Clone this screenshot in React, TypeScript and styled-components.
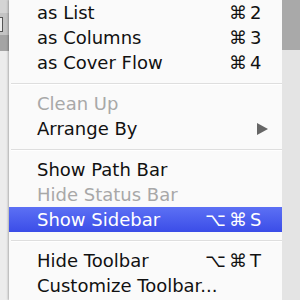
import React from "react";
import styled, { createGlobalStyle } from "styled-components";

const Global = createGlobalStyle`
  html, body { margin: 0; padding: 0; width: 300px; height: 300px; overflow: hidden; background: #e6e6e6; }
  #root { width: 300px; height: 300px; }
`;

const Screen = styled.div`
  display: flex;
  width: 300px;
  height: 300px;
  overflow: hidden;
  font-family: "DejaVu Sans", "Liberation Sans", sans-serif;
`;

const Side = styled.div<{ $right?: boolean }>`
  width: ${(p) => (p.$right ? 18 : 9)}px;
  flex: none;
  display: flex;
  flex-direction: column;
`;

const Band = styled.div<{ $h: number; $c: string }>`
  height: ${(p) => p.$h}px;
  flex: ${(p) => (p.$h === 0 ? 1 : "none")};
  background: ${(p) => p.$c};
`;

const BoxBand = styled.div`
  height: 22px;
  background: #c4c4c4;
  display: flex;
  align-items: center;
`;

const MiniBox = styled.div`
  width: 2px;
  height: 13px;
  border: 1px solid #555;
  border-left: none;
  background: #eee;
`;

const Menu = styled.div`
  width: 273px;
  flex: none;
  background: rgba(250, 250, 250, 0.97);
  box-shadow: -1px 0 2px rgba(0, 0, 0, 0.25), 1px 0 2px rgba(0, 0, 0, 0.25);
  display: flex;
  flex-direction: column;
`;

const Item = styled.div<{ $disabled?: boolean; $active?: boolean }>`
  height: 25px;
  flex: none;
  display: flex;
  align-items: center;
  padding: 0 19px 0 28px;
  font-size: 18px;
  color: ${(p) => (p.$active ? "#fff" : p.$disabled ? "#a8a8a8" : "#111")};
  background: ${(p) =>
    p.$active ? "linear-gradient(#5c70f4, #3b4de8)" : "transparent"};
`;

const Label = styled.span`
  flex: 1;
  white-space: nowrap;
`;

const Shortcut = styled.span`
  display: flex;
  gap: 3px;
  white-space: nowrap;
`;

const Mod = styled.span``;

const Key = styled.span`
  width: 13px;
`;

const Arrow = styled.span`
  width: 0;
  height: 0;
  margin-right: -5px;
  border-top: 6px solid transparent;
  border-bottom: 6px solid transparent;
  border-left: 11px solid #666;
`;

const Sep = styled.div`
  height: 16px;
  flex: none;
  display: flex;
  align-items: center;
  &::after {
    content: "";
    flex: 1;
    margin-left: 2px;
    height: 1px;
    background: #dedede;
    box-shadow: 0 1px 0 #fff;
  }
`;

function Keys({ mods, k }: { mods: string[]; k: string }) {
  return (
    <Shortcut>
      {mods.map((m) => (
        <Mod key={m}>{m}</Mod>
      ))}
      <Key>{k}</Key>
    </Shortcut>
  );
}

export default function App() {
  return (
    <>
      <Global />
      <Screen>
        <Side>
          <Band $h={13} $c="#d4d4d4" />
          <BoxBand>
            <MiniBox />
          </BoxBand>
          <Band $h={16} $c="#a4a4a4" />
          <Band $h={0} $c="#ececec" />
        </Side>
        <Menu>
          <Item>
            <Label>as List</Label>
            <Keys mods={["⌘"]} k="2" />
          </Item>
          <Item>
            <Label>as Columns</Label>
            <Keys mods={["⌘"]} k="3" />
          </Item>
          <Item>
            <Label>as Cover Flow</Label>
            <Keys mods={["⌘"]} k="4" />
          </Item>
          <Sep />
          <Item $disabled>
            <Label>Clean Up</Label>
          </Item>
          <Item>
            <Label>Arrange By</Label>
            <Arrow />
          </Item>
          <Sep />
          <Item>
            <Label>Show Path Bar</Label>
          </Item>
          <Item $disabled>
            <Label>Hide Status Bar</Label>
          </Item>
          <Item $active>
            <Label>Show Sidebar</Label>
            <Keys mods={["⌥", "⌘"]} k="S" />
          </Item>
          <Sep />
          <Item>
            <Label>Hide Toolbar</Label>
            <Keys mods={["⌥", "⌘"]} k="T" />
          </Item>
          <Item>
            <Label>Customize Toolbar...</Label>
          </Item>
        </Menu>
        <Side $right>
          <Band $h={50} $c="#a9a9a9" />
          <Band $h={0} $c="#e4e4e4" />
        </Side>
      </Screen>
    </>
  );
}
